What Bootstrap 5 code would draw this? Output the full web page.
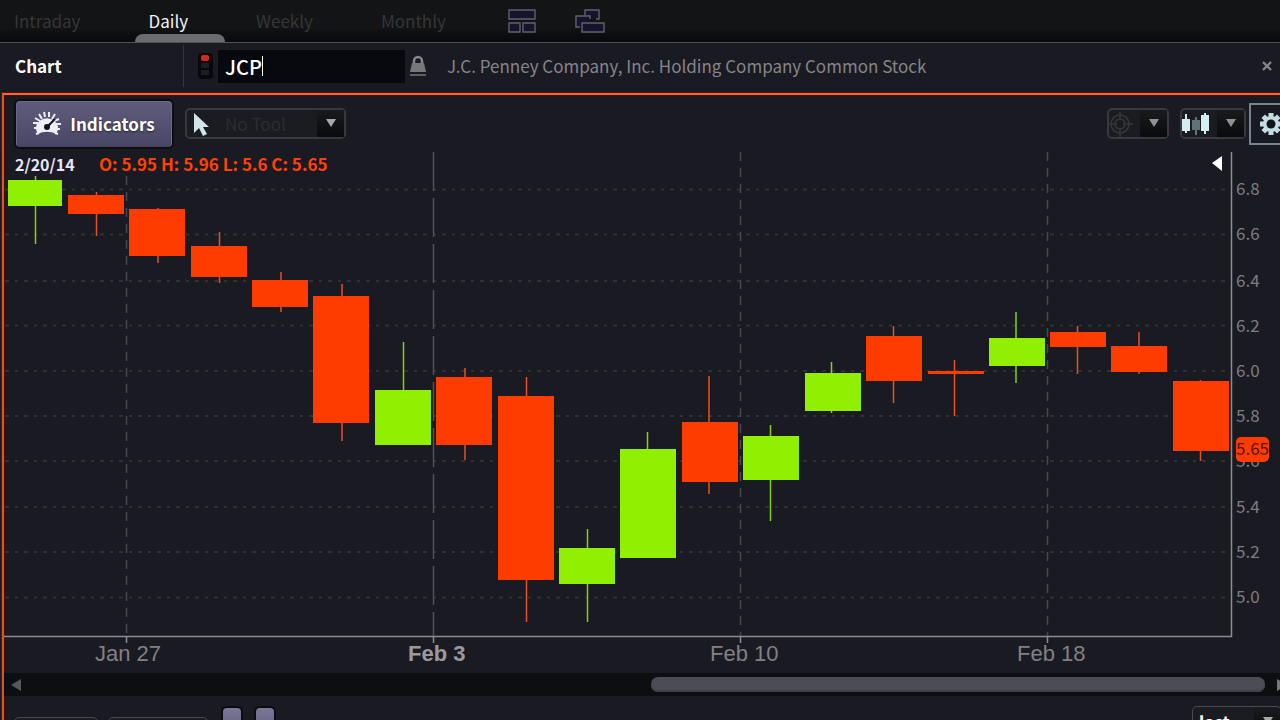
<!DOCTYPE html>
<html lang="en">
<head>
<meta charset="utf-8">
<meta name="viewport" content="width=device-width, initial-scale=1">
<title>JCP – Chart</title>
<link href="https://cdn.jsdelivr.net/npm/bootstrap@5.3.0/dist/css/bootstrap.min.css" rel="stylesheet">
<script src="https://cdn.jsdelivr.net/npm/bootstrap@5.3.0/dist/js/bootstrap.bundle.min.js"></script>
<style>
  html, body { height: 100%; overflow: hidden; }
  body { background: #1a1a22; color: #fff; font-family: "Noto Sans CJK SC", "Open Sans", sans-serif; font-size: 17px; line-height: 24px; }
  button, input { font-family: inherit; }
  svg { display: block; flex: none; }
  .period-bar { height: 43px; padding-left: 14px; gap: 68px; background: linear-gradient(#121416 0%, #121416 65%, #07080a 100%); border-bottom: 1px solid #505054; }
  .period-tab { background: none; border: 0; padding: 0 0 1px; color: #363636; height: 42px; }
  .period-tab.active { color: #f2f2f2; }
  .period-tab.active::after { content: ""; position: absolute; left: -13px; width: 90px; bottom: 0; height: 8px; background: #6c6b70; border-radius: 8px 8px 0 0; }
  .layouts { gap: 39px; margin-left: -6px; }
  .plain-btn { background: none; border: 0; padding: 0; line-height: 0; }
  .symbol-bar { height: 49px; padding-bottom: 3px; }
  .panel-title { width: 184px; height: 42px; border-right: 1px solid #36363c; padding-left: 15px; font-weight: 700; }
  .signal { margin: 0 5px 0 14px; }
  .symbol-input { width: 187px; height: 33px; background: #08090e; border: 0; color: #fff; padding: 0 0 0 7px; font-size: 20px; font-weight: 500; outline: 0; caret-color: transparent; }
  .caret { left: 44px; top: 6px; width: 1px; height: 20px; background: #fff; }
  .company { color: #85858a; }
  .chart-panel { margin: 1px 0 0 2px; border-left: 2px solid #d9532f; border-top: 2px solid #f0663e; box-shadow: 0 0 0 1px #5c1606, inset 1px 1px 0 #4a1206; }
  .tool-row { height: 57px; padding-left: 12px; }
  .indicators { width: 156px; height: 46px; border-radius: 4px; border: 1px solid #6c688a; border-bottom-color: #45425c; background: linear-gradient(#5f5b7c, #4a4766); color: #fff; font-weight: 700; box-shadow: 0 0 0 2px #0d0d12; text-shadow: 0 1px 2px #222; gap: 9px; }
  .drop { height: 31px; border: 2px solid #38383e; border-radius: 5px; background: #1b1c21; padding: 0; color: #2b2c31; }
  .arrow-cell { width: 27px; height: 27px; background: linear-gradient(#191a1c, #090a0c); }
  .tool-drop { width: 161px; margin-left: 13px; }
  .target-drop { width: 62px; }
  .style-drop { width: 66px; margin: 0 3px 0 11px; }
  .gear { width: 44px; height: 42px; border: 2px solid #76868c; background: #171a22; margin-right: -13px; }
  .readout { top: 0; left: 11px; font-size: 17px; font-weight: 700; color: #ff4109; }
  .readout .day { color: #e8e6ff; width: 84px; font-size: 16px; }
  .plot { width: 100%; height: auto; }
  .scroll-row { height: 23px; background: #0d0e10; padding-left: 7px; margin-right: -11px; }
  .scroll-thumb { height: 15px; width: 48%; border-radius: 7px; background: #4d4b55; box-shadow: inset 0 -2px 0 #414145; }
  .lower-row { padding: 10px 0 0 10px; gap: 10px; }
  .low-drop { margin-top: 11px; border-width: 1px; border-color: #4a4a50; }
  .low-a { width: 84px; }
  .low-b { width: 100px; }
  .mini { width: 18px; height: 30px; margin-top: 2px; border: 0; border-radius: 4px; background: linear-gradient(#7a7798, #5b5879); box-shadow: 0 0 0 2px #0b0b10; }
  .mini-group { gap: 15px; margin-left: 5px; }
  .last-drop { width: 90px; padding-left: 6px; border-width: 1px; border-color: #4a4a50; color: #fff; font-weight: 700; margin-right: -2px; }
</style>
</head>
<body>
<nav class="period-bar d-flex align-items-center" aria-label="Chart period">
  <button class="period-tab" type="button">Intraday</button>
  <button class="period-tab active position-relative" type="button">Daily</button>
  <button class="period-tab" type="button">Weekly</button>
  <button class="period-tab" type="button">Monthly</button>
  <div class="layouts d-flex">
    <button class="plain-btn" type="button" aria-label="Tiled layout"><svg width="28" height="24" fill="#14142c" stroke="#62606e" stroke-width="1.4"><path d="M1 1h26v9H1zM1 14h11v9H1zM15 14h12v9H15z"/></svg></button>
    <button class="plain-btn" type="button" aria-label="Floating layout"><svg width="30" height="24" fill="#14142c" stroke="#62606e" stroke-width="1.4"><path d="M10 6V1h14v9h-3"/><path d="M5 18H1V7h14v3"/><path d="M7 14h22v9H7z"/></svg></button>
  </div>
</nav>

<header class="symbol-bar d-flex align-items-center">
  <div class="panel-title d-flex align-items-center">Chart</div>
  <svg class="signal" width="15" height="28" role="img" aria-label="Not linked"><rect width="15" height="26" rx="4" y="1" fill="#08080c"/><rect x="3" y="3" width="8" height="6" rx="2" fill="#d5281c"/><rect x="3" y="11" width="8" height="5" fill="#1d1e23"/><rect x="3" y="18" width="8" height="5" fill="#1d1e23"/></svg>
  <div class="position-relative">
    <input class="symbol-input d-block" type="text" value="JCP" aria-label="Symbol">
    <span class="caret position-absolute"></span>
  </div>
  <svg class="mx-1" width="18" height="22" role="img" aria-label="Locked"><path d="M5 10V6a4 4 0 0 1 8 0v4" fill="none" stroke="#85858a" stroke-width="2.5"/><path d="M3 8h12l2 9H1z" fill="#77777c"/><path d="M1 19h16v2H1z" fill="#606065"/></svg>
  <div class="company ms-3">J.C. Penney Company, Inc. Holding Company Common Stock</div>
  <button class="plain-btn ms-auto me-2" type="button" aria-label="Close chart"><svg width="10" height="10" stroke="#85858a" stroke-width="2.4"><path d="M1 1l8 8M9 1L1 9"/></svg></button>
</header>

<main class="chart-panel">
  <div class="tool-row d-flex align-items-center">
    <button class="indicators d-flex align-items-center justify-content-center p-0" type="button">
      <svg width="28" height="26" viewBox="0 0 28 26"><path d="M5 23a11 10 0 1 1 18 0c-5-3-13-3-18 0z" fill="#eeeefa"/><g fill="none" stroke="#eeeefa" stroke-width="2"><path d="M6 22l-3 1M1 17h4M0 12h5M2 7l5 3M6 3l3 5M11 1l1 5M16 1v5M22 3l-3 5M26 8l-5 2M28 13h-5M27 18h-4M22 22l3 1"/></g><circle cx="14" cy="16" r="3" fill="#111118"/><path d="M13 17L22 8" stroke="#111118" stroke-width="2"/></svg>
      <span>Indicators</span>
    </button>
    <button class="drop tool-drop d-flex align-items-center" type="button">
      <svg width="30" height="27" viewBox="0 0 30 27"><path d="M7 3v20l5-5 4 8 4-2-4-7h6z" fill="#d3e4e8"/></svg>
      <span class="ms-2 me-auto">No Tool</span>
      <span class="arrow-cell d-flex align-items-center justify-content-center"><svg width="12" height="9" fill="#a8a8aa"><path d="M1 0h10L6 8z"/></svg></span>
    </button>
    <button class="drop target-drop d-flex align-items-center ms-auto" type="button" aria-label="Crosshair">
      <svg class="me-auto" width="26" height="27" fill="none" stroke="#363638" stroke-width="1.6"><circle cx="11" cy="14" r="9"/><circle cx="11" cy="14" r="5"/><path d="M0 14h8M14 14h10M11 2v8M11 18v9"/></svg>
      <span class="arrow-cell d-flex align-items-center justify-content-center"><svg width="12" height="9" fill="#929294"><path d="M1 0h10L6 8z"/></svg></span>
    </button>
    <button class="drop style-drop d-flex align-items-center" type="button" aria-label="Chart style">
      <svg class="me-auto" width="30" height="27"><path d="M0 9h3V4h2v5h3v12H5v2H3v-2H0z" fill="#d4edf3"/><path d="M10 10h3V7h2v3h3v10h-3v5h-2v-5h-3z" fill="#5f7379"/><path d="M19 5h3V3h2v2h3v16h-3v3h-2v-3h-3z" fill="#d4edf3"/></svg>
      <span class="arrow-cell d-flex align-items-center justify-content-center"><svg width="12" height="9" fill="#929294"><path d="M1 0h10L6 8z"/></svg></span>
    </button>
    <button class="gear d-flex align-items-center justify-content-center p-0" type="button" aria-label="Settings">
      <svg width="24" height="24" viewBox="-12 -12 24 24"><g fill="#c5dce3"><circle r="8"/><path id="cog" d="M-2.500-11h5v22h-5z"/><use href="#cog" transform="rotate(45)"/><use href="#cog" transform="rotate(90)"/><use href="#cog" transform="rotate(135)"/></g><circle r="4.500" fill="#10151c"/></svg>
    </button>
  </div>

  <div class="position-relative">
    <div class="readout position-absolute d-flex"><span class="day">2/20/14</span><span>O: 5.95 H: 5.96 L: 5.6 C: 5.65</span></div>
    <svg class="plot" viewBox="4 152 1276 521" role="img" aria-label="JCP daily candlestick chart">
      <g stroke="#303036" stroke-width="2" stroke-dasharray="4 6 3 6">
        <path d="M5 189.500H1231M5 234.500H1231M5 281H1231M5 325.500H1231M5 371H1231M5 416H1231M5 461H1231M5 507H1231M5 552H1231M5 597.500H1231"/>
      </g>
      <path d="M126.500 176V636M740.500 152V636M1047.500 152V636" stroke="#47474d" stroke-width="1.500" stroke-dasharray="9 7"/>
      <path d="M433.500 152V636" stroke="#515157" stroke-width="1.500" stroke-dasharray="39 7"/>
      <path d="M4 636.500H1232M1231.500 152V637M126.500 637v6M433.500 637v6M740.500 637v6M1047.500 637v6" stroke="#8c8b91" stroke-width="1.500" fill="none"/>
      <g stroke="#84d016" stroke-width="1.500">
        <path d="M35.500 176V244M403.500 342V390M587.500 529V622M647.500 432V450M770.500 425V521M831.500 362V413M1016 312V383"/>
      </g>
      <g stroke="#e8501f" stroke-width="1.500">
        <path d="M96.500 192V236M158 208V263M219.500 232V283M281 272V312M342 284V441M465 368V460M526.500 377V622M709 376V494M893.500 326V403M954.500 360V416M1077.500 326V374M1139 332V374M1200.500 380V461"/>
      </g>
      <path fill="#90f000" d="M8 180h54v26H8zM375 390h56v55h-56zM559 548h56v36h-56zM620 449h56v109h-56zM743 436h56v44h-56zM805 373h56v38h-56zM989 338h56v28h-56z"/>
      <path fill="#ff3c00" d="M68 195h56v19H68zM129 209h56v47h-56zM191 246h56v31h-56zM252 280h56v27h-56zM313 296h56v127h-56zM436 377h56v68h-56zM498 396h56v184h-56zM682 422h56v60h-56zM866 336h56v45h-56zM928 371h56v3h-56zM1050 332h56v15h-56zM1111 346h56v26h-56zM1173 381h56v70h-56z"/>
      <path d="M1222 156v15l-10-8z" fill="#fff"/>
      <g fill="#7d7d81" font-size="17">
        <text x="1236" y="195">6.8</text><text x="1236" y="240">6.6</text><text x="1236" y="287">6.4</text><text x="1236" y="332">6.2</text><text x="1236" y="377">6.0</text><text x="1236" y="422">5.8</text><text x="1236" y="467">5.6</text><text x="1236" y="513">5.4</text><text x="1236" y="558">5.2</text><text x="1236" y="603">5.0</text>
      </g>
      <rect x="1236" y="437" width="33" height="25" rx="5" fill="#ff3c00"/>
      <text x="1236" y="455" font-size="17" fill="#5a1200">5.65</text>
      <g fill="#808085" font-size="22" font-family="'Liberation Sans', Arial, sans-serif">
        <text x="95" y="661">Jan 27</text><text x="408" y="661" font-weight="700" fill="#9a9a9e">Feb 3</text><text x="710" y="661">Feb 10</text><text x="1017" y="661">Feb 18</text>
      </g>
    </svg>
  </div>

  <div class="scroll-row d-flex align-items-center">
    <svg class="me-auto" width="10" height="12" fill="#58585b"><path d="M10 0v12L0 6z"/></svg>
    <div class="scroll-thumb"></div>
    <svg width="26" height="12" fill="#77777a"><path d="M12 0v12l10-6z"/></svg>
  </div>

  <div class="lower-row d-flex align-items-start">
    <button class="drop low-drop low-a" type="button" aria-label="Order side"></button>
    <button class="drop low-drop low-b" type="button" aria-label="Order type"></button>
    <div class="mini-group d-flex">
      <button class="mini" type="button" aria-label="Add"></button>
      <button class="mini" type="button" aria-label="Remove"></button>
    </div>
    <button class="drop last-drop d-flex align-items-center ms-auto" type="button">
      <span class="me-auto">last</span>
      <span class="arrow-cell d-flex align-items-center justify-content-center"><svg width="12" height="9" fill="#a8a8aa"><path d="M1 0h10L6 8z"/></svg></span>
    </button>
  </div>
</main>
</body>
</html>
